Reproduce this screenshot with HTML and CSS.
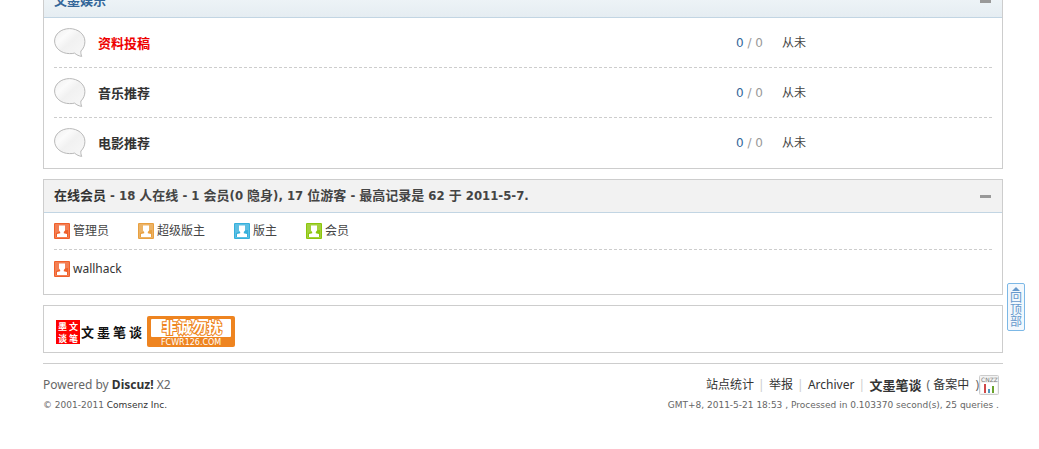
FILE: index.html
```html
<!doctype html>
<html lang="zh-CN">
<head>
	<meta charset="UTF-8">
	<title>文墨笔谈</title>
	<link rel="stylesheet" href="styles.css">
</head>
<body>
	<svg class="defs" aria-hidden="true">
		<defs>
			<linearGradient id="bubbleFill" x1="0" y1="0" x2="1" y2="1">
				<stop offset="0" stop-color="#eee"/>
				<stop offset=".3" stop-color="#fbfbfb"/>
				<stop offset=".5" stop-color="#f1f1f1"/>
				<stop offset="1" stop-color="#f8f8f8"/>
			</linearGradient>
			<symbol id="bubble" viewBox="0 0 32 30">
				<path d="M15.500.6C7.200.6.600 6 .6 13s6.600 12.600 14.900 12.600c2 0 3.500 0 5-.5 2.300 1.900 4.500 2.900 7.200 3.300-.8-1.800-1-3.500-.8-5.400 2.600-2.400 4-5.800 4-9.500C30.900 6 23.800.6 15.500.6z" fill="url(#bubbleFill)" stroke="#b8b8b8"/>
			</symbol>
			<symbol id="user" viewBox="0 0 16 16">
				<rect width="16" height="16" rx="1" fill="currentColor"/>
				<path d="M1.500 1.500h13v13h-13z" fill="none" stroke="#fff" stroke-opacity=".2"/>
				<path d="M2 2h12v5q-6 0-12 3z" fill="#fff" opacity=".2"/>
				<path d="M5 2.500h6v5L9.800 9v1.200l3.200.8v3H3v-3l3.200-.8V9L5 7.500z" fill="#fff"/>
			</symbol>
		</defs>
	</svg>
	<div class="wp">
		<div class="bm">
			<div class="bm_h blue">
				<h2><a href="#">文墨娱乐</a></h2>
				<button class="fold" type="button" aria-label="收起"></button>
			</div>
			<ul class="forums">
				<li>
					<svg class="bubble"><use href="#bubble"/></svg>
					<a class="name hot" href="#">资料投稿</a>
					<span class="num"><b>0</b> / 0</span>
					<span>从未</span>
				</li>
				<li>
					<svg class="bubble"><use href="#bubble"/></svg>
					<a class="name" href="#">音乐推荐</a>
					<span class="num"><b>0</b> / 0</span>
					<span>从未</span>
				</li>
				<li>
					<svg class="bubble"><use href="#bubble"/></svg>
					<a class="name" href="#">电影推荐</a>
					<span class="num"><b>0</b> / 0</span>
					<span>从未</span>
				</li>
			</ul>
		</div>

		<!-- 在线会员 -->
		<div class="bm">
			<div class="bm_h">
				<h3><a href="#">在线会员</a> - 18 人在线 - 1 会员(0 隐身), 17 位游客 - 最高记录是 62 于 2011-5-7.</h3>
				<button class="fold" type="button" aria-label="收起"></button>
			</div>
			<div class="online">
				<ul class="legend">
					<li><svg class="user admin"><use href="#user"/></svg>管理员</li>
					<li><svg class="user super"><use href="#user"/></svg>超级版主</li>
					<li><svg class="user mod"><use href="#user"/></svg>版主</li>
					<li><svg class="user member"><use href="#user"/></svg>会员</li>
				</ul>
				<ul class="members">
					<li><svg class="user admin"><use href="#user"/></svg><a href="#">wallhack</a></li>
				</ul>
			</div>
		</div>

		<!-- 友情链接 -->
		<div class="bm links">
			<a href="#">
				<svg width="88" height="31" viewBox="0 0 88 31" role="img" aria-label="文墨笔谈">
					<rect x="1" y="4" width="24" height="24" fill="#f00"/>
					<g class="seal">
						<text x="3" y="14">墨</text>
						<text x="3" y="26">谈</text>
						<text x="14" y="14">文</text>
						<text x="14" y="26">笔</text>
					</g>
					<g class="brush">
						<text x="26" y="21">文</text>
						<text x="42" y="21">墨</text>
						<text x="58" y="21">笔</text>
						<text x="74" y="21">谈</text>
					</g>
				</svg>
			</a>
			<a href="#">
				<svg width="88" height="31" viewBox="0 0 88 31" role="img" aria-label="非诚勿扰">
					<rect width="88" height="31" rx="2" fill="#ee8420"/>
					<rect x="4" y="3" width="80" height="18" rx="1" fill="#fff"/>
					<text class="ad" x="15" y="17">非诚勿扰</text>
					<text class="ad_url" x="14" y="29">FCWR126.COM</text>
				</svg>
			</a>
		</div>

		<div class="ft">
			<div>
				<p>Powered by <a href="#"><strong>Discuz!</strong></a> X2</p>
				<p class="xs">© 2001-2011 <a href="#">Comsenz Inc.</a></p>
			</div>
			<div class="ft_r">
				<p class="nav">
					<a href="#">站点统计</a><span class="pipe">|</span><a href="#">举报</a><span class="pipe">|</span><a href="#">Archiver</a><span class="pipe">|</span><a class="site" href="#">文墨笔谈</a>
					<span class="icp">( <a href="#">备案中</a>&nbsp; )</span>
					<a class="cnzz" href="#">
						<svg width="20" height="20" viewBox="0 0 20 20" role="img" aria-label="站长统计">
							<rect x=".5" y=".5" width="19" height="19" rx="1" fill="#f3f3f3" stroke="#ccc"/>
							<text x="2" y="7">CNZZ</text>
							<path d="M2 8h16v10H2z" fill="#fff"/>
							<path d="M5 9h2v9H5z" fill="#d04848"/>
							<path d="M9 14h2v4H9z" fill="#4f96bd"/>
							<path d="M13 11h2v7h-2z" fill="#69a32d"/>
						</svg>
					</a>
				</p>
				<p class="xs">GMT+8, 2011-5-21 18:53 , Processed in 0.103370 second(s), 25 queries .</p>
			</div>
		</div>
	</div>
	<a class="totop" href="#"><i></i>回顶部</a>
</body>
</html>
```

FILE: styles.css
```css
*{ box-sizing: border-box;}
body,h2,h3,p,ul{ margin: 0; padding: 0;}
body{ font: 12px/18px "Noto Sans", "Noto Sans CJK SC", sans-serif; color: #444; background: #fff; overflow: hidden;}
ul{ list-style: none;}
a{ color: #333; text-decoration: none;}
a:hover{ text-decoration: underline;}
svg{ display: block;}
.defs{ position: absolute; width: 0; height: 0;}
/* 页面停在底部，第一个标题栏被窗口上沿截断 */
.wp{ margin-top: -16px; padding: 0 36px 0 43px;}

.bm{ margin-bottom: 10px; border: 1px solid #cdcdcd;}
.bm_h{ display: flex; justify-content: space-between; align-items: center; height: 33px; padding: 0 10px; border-bottom: 1px solid #c2d5e3; background: #f2f2f2;}
.bm_h h2,.bm_h h3{ font: bold 13px/18px "DejaVu Sans Condensed", "Noto Sans CJK SC", sans-serif;}
.blue{ background: linear-gradient(#f4f8fa, #e5edf2);}
.blue h2 a{ color: #369;}
.fold{ width: 13px; height: 13px; padding: 5px 1px; border: 0; background: #999 content-box;}

.forums{ padding: 0 10px;}
.forums li{ display: grid; grid-template-columns: 44px 1fr 46px 210px; align-items: center; height: 50px; border-bottom: 1px dashed #cdcdcd;}
.forums li:last-child{ border-bottom: 0;}
.bubble{ width: 32px; height: 30px;}
.name{ font: bold 13px/18px "Noto Sans CJK SC", sans-serif;}
.hot{ color: #e00;}
.num{ color: #999; font-family: "DejaVu Sans", sans-serif;}
.num b{ color: #369; font-weight: normal;}

.online{ padding: 0 10px 7px;}
.legend,.members{ display: flex; gap: 29px; align-items: center; height: 37px;}
.legend{ border-bottom: 1px dashed #cdcdcd;}
.online li{ display: flex; gap: 3px; align-items: center; line-height: 20px;}
.user{ width: 16px; height: 16px;}
.admin{ color: #f0602a;}
.super{ color: #e8a040;}
.mod{ color: #35b0dc;}
.member{ color: #8cc60c;}

.links{ display: flex; gap: 4px; padding: 10px 11px 5px;}
.seal{ font: bold 9px "Noto Sans CJK SC", sans-serif; fill: #fff;}
.brush{ font: bold 13px "Noto Sans CJK SC", sans-serif; fill: #111;}
.ad{ font: bold 15px "Noto Sans CJK SC", sans-serif; fill: #fff; stroke: #ee8420; stroke-width: 2px; paint-order: stroke;}
.ad_url{ font: 8px "DejaVu Sans", sans-serif; fill: #fff;}

.ft{ display: flex; justify-content: space-between; padding: 11px 4px 0 0; border-top: 1px solid #cdcdcd; color: #666;}
.ft p{ height: 20px; line-height: 20px;}
.ft .xs{ font: 9px/20px "DejaVu Sans", sans-serif;}
.nav{ display: flex; justify-content: flex-end;}
.site{ font-weight: bold; font-size: 13px;}
.pipe{ width: 15px; text-align: center; color: #ccc;}
.icp{ margin-left: 5px;}
.cnzz text{ font: 6px "DejaVu Sans", sans-serif; fill: #777;}

.totop{ position: fixed; right: 14px; bottom: 118px; width: 18px; padding: 3px 2px 2px; border: 1px solid #7cb8e6; border-radius: 2px; background: #f3f8fd; color: #69c; font-size: 12px; line-height: 12px; text-align: center;}
.totop i{ display: block; width: 0; margin: 0 auto 1px; border: 4px solid transparent; border-top: 0; border-bottom-color: #69c;}
```
